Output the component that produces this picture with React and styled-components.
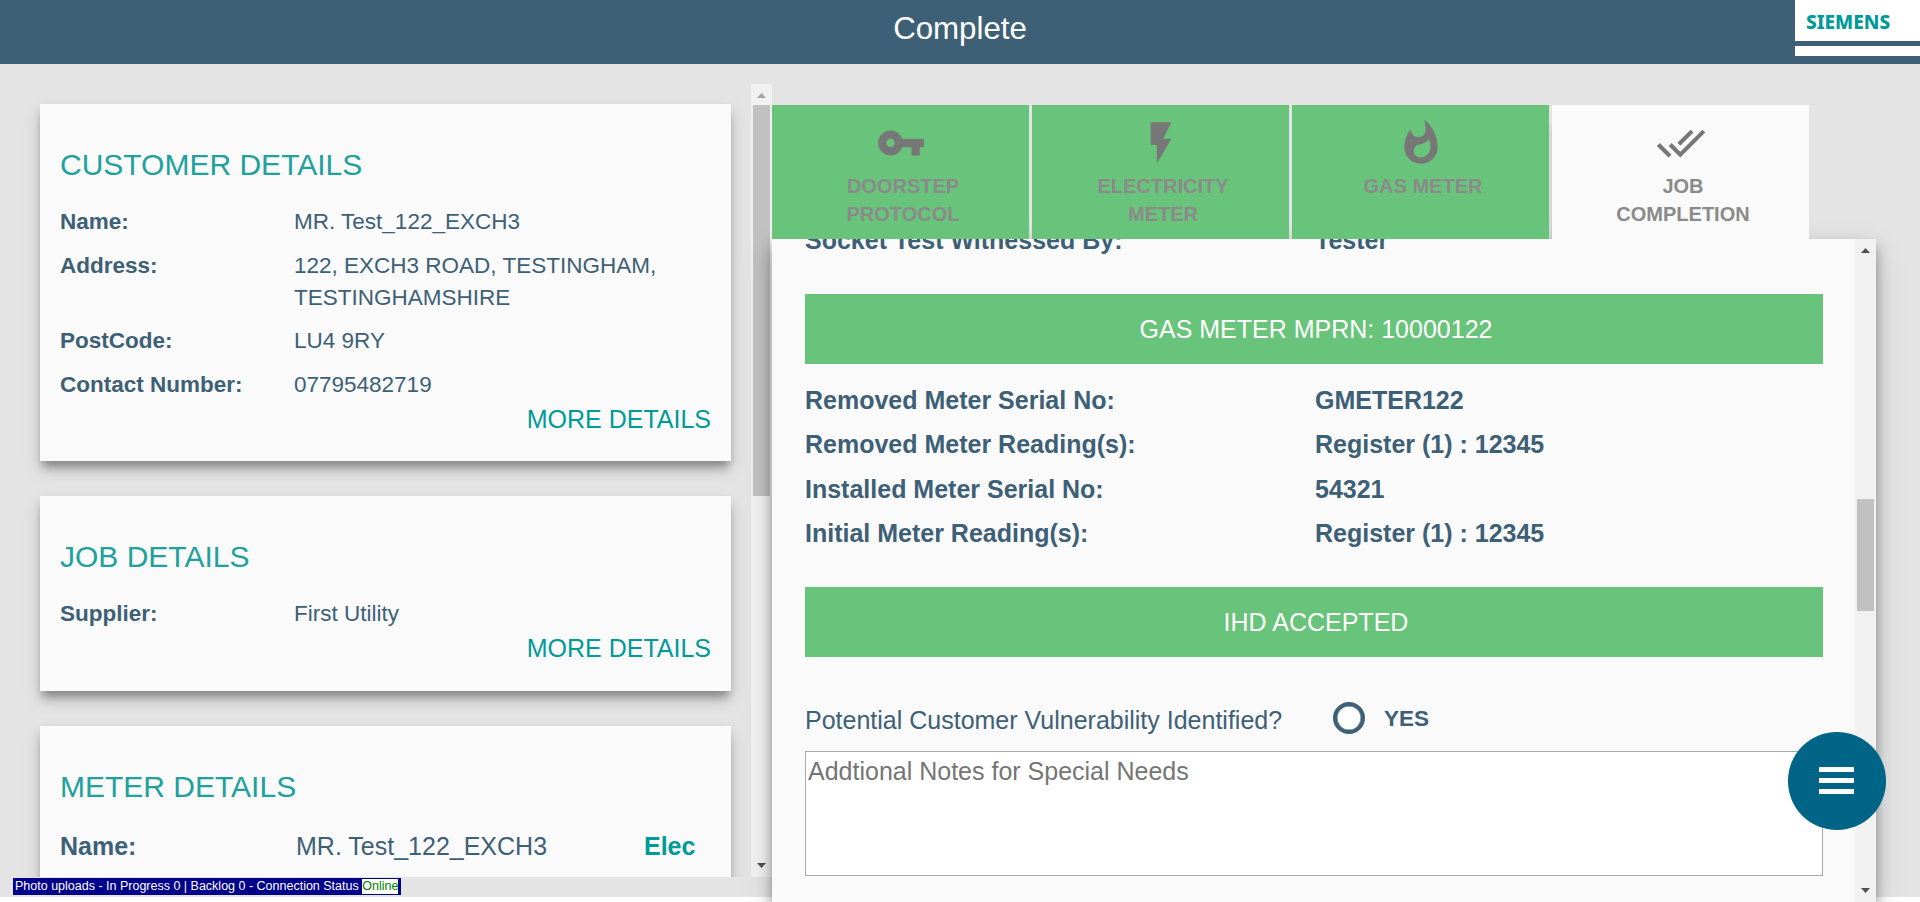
import React from "react";
import styled, { createGlobalStyle, css } from "styled-components";
import { MdVpnKey, MdFlashOn, MdWhatshot, MdDoneAll } from "react-icons/md";

const Global = createGlobalStyle`
  * { box-sizing: border-box; }
  html, body { margin: 0; height: 902px; overflow: hidden; background: #fff; }
  body { font-family: "Liberation Sans", Arial, sans-serif; color: #3d6077; }
`;

const teal = "#009a98";
const green = "#69c47b";
const depth = css`
  box-shadow: 0 10px 8px -3px rgba(0, 0, 0, 0.24), 0 8px 16px 0 rgba(0, 0, 0, 0.17), 0 3px 6px 0 rgba(0, 0, 0, 0.07);
`;

const Screen = styled.div`
  height: 902px;
  overflow: hidden;
  display: flex;
  flex-direction: column;
`;
const Header = styled.header`
  flex: none;
  height: 64px;
  background: #3d6077;
  display: grid;
  grid-template-columns: 1fr auto 1fr;
`;
const Title = styled.h1`
  grid-column: 2;
  margin: 0;
  color: #fff;
  font-size: 31.25px;
  line-height: 58px;
  font-weight: 400;
`;
const Logo = styled.div`
  justify-self: end;
  width: 125px;
  height: 56px;
  background: #fff;
  display: flex;
  flex-direction: column;
`;
const LogoText = styled.div`
  height: 41px;
  padding: 0 0 0 11px;
  color: ${teal};
  font: 800 19px/44px "Noto Sans", sans-serif;
`;
const LogoBar = styled.div`
  flex: none;
  height: 5px;
  background: #3d6077;
`;
const Main = styled.main`
  position: relative;
  flex: none;
  height: 833px;
  background: #e4e4e4;
  display: flex;
`;
const Left = styled.section`
  width: 772px;
  height: 793px;
  margin-top: 20px;
  display: flex;
  overflow: hidden;
`;
const Cards = styled.div`
  flex: 1;
  padding: 20px 20px 0 40px;
  overflow: hidden;
  display: flex;
  flex-direction: column;
  gap: 35px;
`;
const Card = styled.article`
  flex: none;
  height: ${(p) => p.$height}px;
  padding: 43px 20px 0;
  background: #fafafa;
  ${depth}
`;
const CardTitle = styled.h2`
  margin: 0 0 18px;
  font-size: 30px;
  line-height: 36px;
  font-weight: 400;
  color: #20a19d;
`;
const Field = styled.div`
  display: grid;
  grid-template-columns: ${(p) => (p.$large ? "236px 348px 1fr" : "234px 400px")};
  font-size: ${(p) => (p.$large ? 25 : 22.5)}px;
  line-height: 32px;
  margin-bottom: 11.5px;
  padding-top: ${(p) => (p.$large ? 7 : 5)}px;
  ${CardTitle} ~ & { margin-top: -5px; }
  ${CardTitle} + & { margin-top: 0; }
`;
const FieldLabel = styled.span`
  font-weight: 700;
`;
const MeterType = styled.span`
  font-weight: 700;
  color: ${teal};
`;
const More = styled.div`
  margin-top: -9.5px;
  text-align: right;
  font-size: 25px;
  line-height: 32px;
  color: ${teal};
`;
const Scrollbar = styled.div`
  flex: none;
  width: 21px;
  background: #f1f1f1;
  padding: 0 2px;
  display: flex;
  flex-direction: column;
  align-items: center;
`;
const Arrow = styled.svg`
  flex: none;
  width: 17px;
  height: 21px;
  fill: ${(p) => p.$color || "#505050"};
`;
const Thumb = styled.div`
  width: 17px;
  height: ${(p) => p.$height}px;
  margin-top: ${(p) => p.$top || 0}px;
  background: #c1c1c1;
`;
const ScrollGap = styled.div`
  flex: 1;
`;
const Right = styled.section`
  width: 1104px;
  height: 838px;
  padding-top: 41px;
  display: flex;
  flex-direction: column;
`;
const Tabs = styled.nav`
  position: relative;
  height: 134px;
  display: flex;
  gap: 3px;
  z-index: 1;
`;
const Tab = styled.div`
  width: 257px;
  height: 134px;
  padding: 13px 55px 0;
  background: ${(p) => (p.$active ? "#fafafa" : green)};
  box-shadow: ${(p) => (p.$active ? "-2px 18px 6px -3px rgba(0, 0, 0, 0.25)" : "none")};
  clip-path: inset(0 0 0 -6px);
  display: flex;
  flex-direction: column;
  align-items: center;
  color: #777;
`;
const TabText = styled.span`
  margin: 4px 0 0 5px;
  font-size: 20px;
  line-height: 28px;
  font-weight: 700;
  text-align: center;
  color: #8a8a8a;
`;
const Panel = styled.div`
  flex: none;
  height: 663px;
  display: flex;
  background: #fafafa;
  box-shadow: 0 8px 12px 0 rgba(0, 0, 0, 0.35), 0 10px 30px 0 rgba(0, 0, 0, 0.14);
`;
const Content = styled.div`
  flex: 1;
  height: 663px;
  overflow: hidden;
  padding: 0 32px 0 33px;
`;
const Reading = styled.div`
  display: grid;
  grid-template-columns: 510px 1fr;
  height: 44.4px;
  font-size: 25px;
  line-height: 44px;
  font-weight: 700;
`;
const Clipped = styled(Reading)`
  height: 44px;
  margin-top: -21px;
`;
const Banner = styled.div`
  margin-top: ${(p) => p.$top}px;
  padding-left: 4px;
  height: 70px;
  background: ${green};
  color: #fff;
  text-align: center;
  font-size: 25px;
  line-height: 71px;
`;
const Readings = styled.div`
  padding-top: 14px;
  height: 191px;
`;
const Question = styled.div`
  height: 94px;
  padding-top: 45px;
  display: flex;
  align-items: flex-start;
  font-size: 25px;
  line-height: 37px;
`;
const Prompt = styled.span`
  width: 528px;
`;
const Radio = styled.span`
  width: 32px;
  height: 32px;
  border: 4px solid #3d6077;
  border-radius: 50%;
  background: #fff;
  box-shadow: inset 0 0 0 0.5px #3d6077;
`;
const RadioLabel = styled.span`
  margin-left: 19px;
  font-size: 22.5px;
  line-height: 34px;
  font-weight: 700;
`;
const Notes = styled.textarea`
  display: block;
  width: 1018px;
  height: 125px;
  padding: 2px 2px;
  border: 1px solid #a9a9a9;
  resize: none;
  background: #fff;
  font: 25px/34px "Liberation Sans", Arial, sans-serif;
  &::placeholder { color: #757575; }
`;
const Status = styled.div`
  position: absolute;
  left: 13px;
  top: 814px;
  height: 17px;
  padding: 1px 3px 1px 2px;
  background: #00008b;
  color: #fff;
  font-size: 12.5px;
  line-height: 15px;
  white-space: nowrap;
`;
const Online = styled.span`
  display: inline-block;
  background: #fff;
  color: #008000;
`;
const Fab = styled.button`
  position: absolute;
  left: 1788px;
  top: 668px;
  width: 97.5px;
  height: 97.5px;
  padding: 0;
  border: 0;
  border-radius: 50%;
  background: #006487;
  display: flex;
  align-items: center;
  justify-content: center;
  z-index: 3;
`;

const Up = ({ color }) => (
  <Arrow $color={color} viewBox="0 0 17 21"><path d="M4 14h9L8.500 9z" /></Arrow>
);
const Down = () => (
  <Arrow viewBox="0 0 17 21"><path d="M4 7h9L8.500 12z" /></Arrow>
);

const customer = [
  ["Name:", "MR. Test_122_EXCH3"],
  ["Address:", "122, EXCH3 ROAD, TESTINGHAM, TESTINGHAMSHIRE"],
  ["PostCode:", "LU4 9RY"],
  ["Contact Number:", "07795482719"],
];
const tabs = [
  ["DOORSTEP PROTOCOL", MdVpnKey],
  ["ELECTRICITY METER", MdFlashOn],
  ["GAS METER", MdWhatshot],
  ["JOB COMPLETION", MdDoneAll],
];
const readings = [
  ["Removed Meter Serial No:", "GMETER122"],
  ["Removed Meter Reading(s):", "Register (1) : 12345"],
  ["Installed Meter Serial No:", "54321"],
  ["Initial Meter Reading(s):", "Register (1) : 12345"],
];

export default function App() {
  return (
    <Screen>
      <Global />
      <Header>
        <Title>Complete</Title>
        <Logo>
          <LogoText>SIEMENS</LogoText>
          <LogoBar />
        </Logo>
      </Header>
      <Main>
        <Left>
          <Cards>
            <Card $height={357}>
              <CardTitle>CUSTOMER DETAILS</CardTitle>
              {customer.map(([label, value]) => (
                <Field key={label}><FieldLabel>{label}</FieldLabel><span>{value}</span></Field>
              ))}
              <More>MORE DETAILS</More>
            </Card>
            <Card $height={195}>
              <CardTitle>JOB DETAILS</CardTitle>
              <Field><FieldLabel>Supplier:</FieldLabel><span>First Utility</span></Field>
              <More>MORE DETAILS</More>
            </Card>
            <Card $height={300}>
              <CardTitle>METER DETAILS</CardTitle>
              <Field $large>
                <FieldLabel>Name:</FieldLabel><span>MR. Test_122_EXCH3</span><MeterType>Elec</MeterType>
              </Field>
            </Card>
          </Cards>
          <Scrollbar>
            <Up color="#a3a3a3" />
            <Thumb $height={391} />
            <ScrollGap />
            <Down />
          </Scrollbar>
        </Left>
        <Right>
          <Tabs>
            {tabs.map(([label, Icon], i) => (
              <Tab key={label} $active={i === 3}>
                <Icon size={50} />
                <TabText>{label}</TabText>
              </Tab>
            ))}
          </Tabs>
          <Panel>
            <Content>
              <Clipped><span>Socket Test Witnessed By:</span><span>Tester</span></Clipped>
              <Banner $top={32}>GAS METER MPRN: 10000122</Banner>
              <Readings>
                {readings.map(([label, value]) => (
                  <Reading key={label}><span>{label}</span><span>{value}</span></Reading>
                ))}
              </Readings>
              <Banner $top={32}>IHD ACCEPTED</Banner>
              <Question>
                <Prompt>Potential Customer Vulnerability Identified?</Prompt>
                <Radio />
                <RadioLabel>YES</RadioLabel>
              </Question>
              <Notes placeholder="Addtional Notes for Special Needs" />
            </Content>
            <Scrollbar>
              <Up />
              <Thumb $top={239} $height={112} />
              <ScrollGap />
              <Down />
            </Scrollbar>
          </Panel>
        </Right>
        <Status>Photo uploads - In Progress 0 | Backlog 0 - Connection Status <Online>Online</Online></Status>
        <Fab aria-label="Menu">
          <svg width="35" height="27" fill="#fff"><path d="M0 0h35v5H0zM0 11h35v5H0zM0 22h35v5H0z" /></svg>
        </Fab>
      </Main>
    </Screen>
  );
}
